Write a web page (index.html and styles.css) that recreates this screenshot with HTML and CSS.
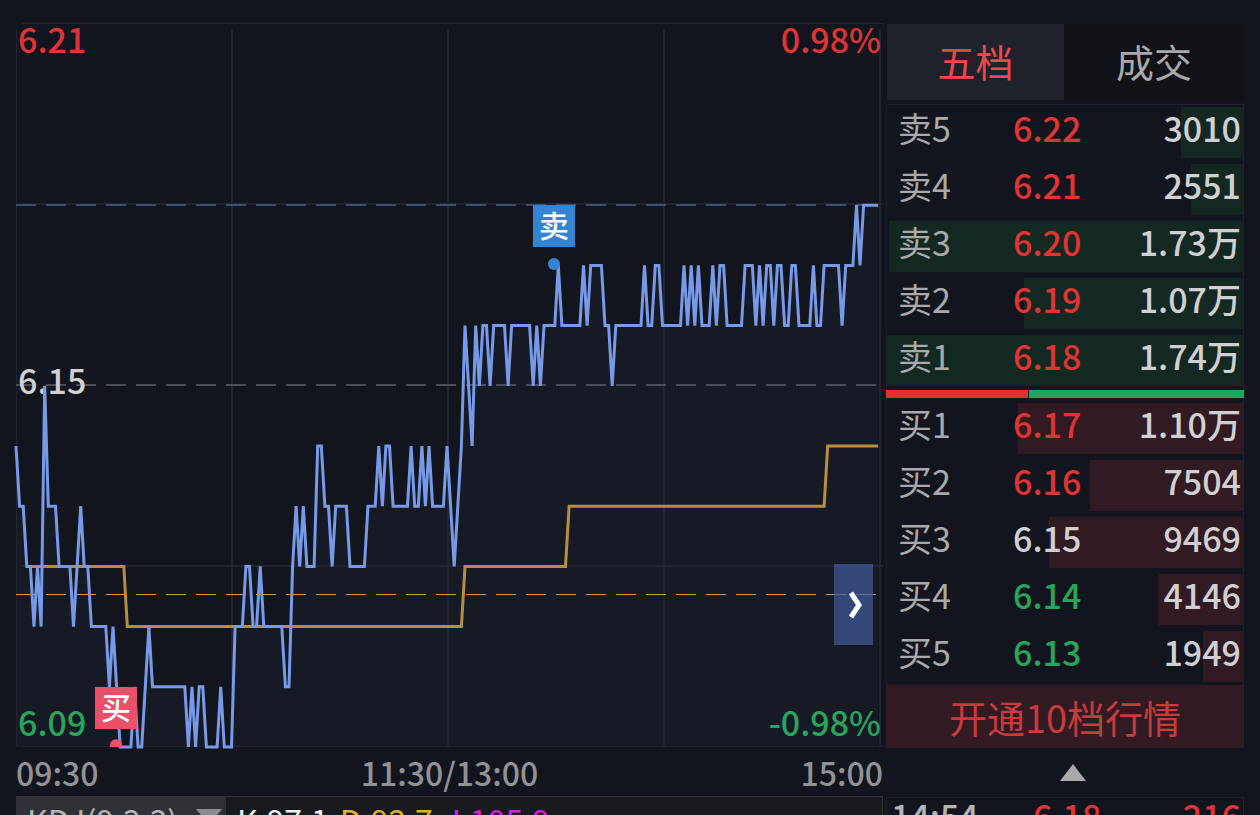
FILE: index.html
```
<!DOCTYPE html>
<html lang="zh-CN">
<head>
    <meta charset="UTF-8">
    <meta name="viewport" content="width=device-width, initial-scale=1.0">
    <title>分时行情</title>
    <link rel="stylesheet" href="styles.css">
</head>
<body>
    <main class="layout">
        <section class="left">
            <div class="chart">
                <svg viewBox="16 23 867 724" role="img" aria-label="分时走势">
                    <path id="area" class="area" d=""/>
                    <path class="grid thin" d="M22 23.5H883M16.5 29V747M22 746.5H883"/>
                    <path class="grid" d="M22 204H883M22 566H883M232 29V747M448 29V747M664 29V747M880 29V747"/>
                    <path class="dash high" d="M16 205H877"/>
                    <path class="dash mid" d="M16 385H877"/>
                    <path class="dash cost" d="M16 594.5H877"/>
                    <text class="up" x="18" y="53">6.21</text>
                    <text class="flat" x="18" y="394">6.15</text>
                    <text class="down" x="18" y="736">6.09</text>
                    <text class="up" x="881" y="53" text-anchor="end">0.98%</text>
                    <text class="down" x="881" y="736" text-anchor="end">-0.98%</text>
                    <polyline id="avg" class="line avg" points=""/>
                    <polyline id="price" class="line price" points=""/>
                    <circle class="sell" cx="554" cy="264" r="6"/>
                    <rect class="sell" x="533" y="205" width="42" height="42"/>
                    <text class="mark" x="554" y="237" text-anchor="middle">卖</text>
                    <path class="buy" d="M110.3 747A6 6 0 1 1 121.7 747Z"/>
                    <rect class="buy" x="95" y="687" width="42" height="42"/>
                    <text class="mark" x="116" y="719" text-anchor="middle">买</text>
                </svg>
                <button class="expand" type="button" aria-label="展开">
                    <svg viewBox="0 0 14 28" width="14" height="28"><path d="M2 2L10 14L2 26"/></svg>
                </button>
            </div>
            <div class="times">
                <span>09:30</span>
                <span>11:30/13:00</span>
                <span>15:00</span>
            </div>
            <div class="indicator">
                <div class="picker">
                    <select aria-label="指标">
                        <option>KDJ(9,3,3)</option>
                    </select>
                    <i class="arrow-down"></i>
                </div>
                <span class="k">K:97.1</span>
                <span class="d">D:92.7</span>
                <span class="j">J:105.9</span>
            </div>
        </section>

        <aside class="right">
            <div class="tabs">
                <button class="tab active" type="button">五档</button>
                <button class="tab" type="button">成交</button>
            </div>
            <div class="book">
                <table class="asks">
                    <tbody>
                        <tr style="--w: 17.3%"><th>卖5</th><td class="up">6.22</td><td>3010</td></tr>
                        <tr style="--w: 14.7%"><th>卖4</th><td class="up">6.21</td><td>2551</td></tr>
                        <tr style="--w: 99.4%"><th>卖3</th><td class="up">6.20</td><td>1.73万</td></tr>
                        <tr style="--w: 61.5%"><th>卖2</th><td class="up">6.19</td><td>1.07万</td></tr>
                        <tr style="--w: 100%"><th>卖1</th><td class="up">6.18</td><td>1.74万</td></tr>
                    </tbody>
                </table>
                <div class="ratio"><span style="width: 40%"></span></div>
                <table class="bids">
                    <tbody>
                        <tr style="--w: 63.2%"><th>买1</th><td class="up">6.17</td><td>1.10万</td></tr>
                        <tr style="--w: 43.1%"><th>买2</th><td class="up">6.16</td><td>7504</td></tr>
                        <tr style="--w: 54.4%"><th>买3</th><td>6.15</td><td>9469</td></tr>
                        <tr style="--w: 23.8%"><th>买4</th><td class="down">6.14</td><td>4146</td></tr>
                        <tr style="--w: 11.2%"><th>买5</th><td class="down">6.13</td><td>1949</td></tr>
                    </tbody>
                </table>
            </div>
            <button class="open-ten" type="button">开通10档行情</button>
            <button class="collapse" type="button" aria-label="收起">
                <svg viewBox="0 0 26 17" width="26" height="17"><path d="M13 0L26 17H0Z"/></svg>
            </button>
            <table class="deals">
                <tbody>
                    <tr><td>14:54</td><td class="up">6.18</td><td class="up">216</td></tr>
                </tbody>
            </table>
        </aside>
    </main>
    <script src="chart.js"></script>
</body>
</html>
```
FILE: styles.css
```
* {
    box-sizing: border-box;
}
body {
    margin: 0;
    height: 100vh;
    overflow: hidden;
    background: #12151d;
    color: #d0d0d2;
    font-family: 'Noto Sans CJK SC', 'Noto Sans', sans-serif;
    font-size: 34px;
}
button, select {
    margin: 0;
    padding: 0;
    border: none;
    border-radius: 0;
    font-family: inherit;
    cursor: pointer;
}
.layout {
    display: grid;
    grid-template-columns: minmax(0, 1fr) 358px;
    gap: 3px;
    padding: 23px 16px 0;
}
.up {
    color: #e03434;
    fill: #e03434;
}
.down {
    color: #28a45c;
    fill: #28a45c;
}
.flat {
    fill: #d0d0d2;
}

/* chart */
.chart {
    position: relative;
}
.chart > svg {
    display: block;
    width: 100%;
    overflow: visible;
}
.chart text {
    font-size: 34px;
    font-weight: 500;
}
.area {
    fill: #161a25;
}
.grid {
    fill: none;
    stroke: #212530;
    stroke-width: 2;
}
.grid.thin {
    stroke-width: 1;
}
.dash {
    fill: none;
    stroke-width: 2;
    stroke-dasharray: 20 10;
}
.high {
    stroke: #3f4d70;
}
.mid {
    stroke: #4b4e57;
}
.cost {
    stroke: #c9994f;
    stroke-width: 1;
}
.line {
    fill: none;
    stroke-width: 3;
}
.avg {
    stroke: #b98d3c;
}
.price {
    stroke: #769ae8;
}
.sell {
    fill: #3584d2;
}
.buy {
    fill: #e9506a;
}
.chart .mark {
    font-size: 30px;
    font-weight: 500;
    fill: #ffffff;
}
.expand {
    position: absolute;
    right: 10px;
    bottom: 102px;
    width: 39px;
    height: 81px;
    padding-left: 4px;
    background: rgba(66, 92, 155, 0.7);
}
.expand svg {
    display: block;
    margin: auto;
}
.expand path {
    fill: none;
    stroke: #ffffff;
    stroke-width: 5;
}
.times {
    display: flex;
    justify-content: space-between;
    height: 49px;
    font-size: 32px;
    font-weight: 500;
    line-height: 50px;
    color: #929296;
}
.indicator {
    display: flex;
    gap: 11px;
    height: 50px;
    border: 1px solid #30323b;
    background: #191a1f;
    font-size: 32px;
    line-height: 46px;
}
.picker {
    position: relative;
    width: 209px;
    background: #303137;
}
.picker select {
    width: 100%;
    height: 46px;
    padding-left: 10px;
    appearance: none;
    background: none;
    color: #b4b4b6;
    font-size: 32px;
}
.arrow-down {
    position: absolute;
    right: 4px;
    top: 12px;
    border: 13px solid transparent;
    border-top: 16px solid #8c8c8e;
    border-bottom: none;
    pointer-events: none;
}
.k {
    color: #f0f0f0;
}
.d {
    color: #e0ae30;
}
.j {
    color: #d820d8;
}

/* order book */
.tabs {
    display: grid;
    grid-template-columns: 177fr 180fr;
    margin: 1px 0 4px 1px;
}
.tab {
    height: 76px;
    padding-bottom: 4px;
    background: #101216;
    color: #a9a9ab;
    font-size: 38px;
}
.tab.active {
    background: #1f222b;
    color: #ea4a4c;
}
.book {
    border: 1px solid #1e222c;
    border-bottom: none;
    padding: 2px 0 3px;
}
table {
    display: block;
}
tbody {
    display: grid;
    gap: 6px;
}
tr {
    display: grid;
    grid-template-columns: 126px 80px 1fr;
    height: 51px;
    line-height: 42px;
    background: linear-gradient(#122820, #122820) no-repeat right / var(--w) 100%;
}
.bids tr {
    background-image: linear-gradient(#321a22, #321a22);
}
th, td {
    padding: 0;
    text-align: left;
    font-weight: 500;
}
th {
    padding-left: 11px;
    font-weight: 400;
    color: #a9a9ab;
}
td:last-child {
    padding-right: 2px;
    text-align: right;
}
.ratio {
    height: 8px;
    margin: 4px -1px 5px;
    background: #1fa55c;
}
.ratio span {
    display: block;
    height: 100%;
    border-right: 1px solid #12151d;
    background: #e62e30;
}
.open-ten {
    display: block;
    width: 100%;
    height: 63px;
    background: #321a22;
    color: #c83a3c;
    font-size: 38px;
}
.collapse {
    display: block;
    width: 100%;
    height: 49px;
    padding-left: 16px;
    background: none;
}
.collapse svg {
    display: block;
    margin: auto;
}
.collapse path {
    fill: #a9a9ab;
}
.deals {
    border: 1px solid #1e222c;
}
.deals tr {
    grid-template-columns: 142px 80px 1fr;
    padding-left: 4px;
    line-height: 36px;
    background: none;
}
.deals td:first-child {
    color: #b4b4b6;
}
```
FILE: chart.js
```
// minute:level pairs, level 0 is 6.09 and each level is 0.01
const priceData = '0:5 1:4 2:4 3:3 4:3 5:2 6:3 7:2 8:6 9:4 11:4 12:3 15:3 16:2 17:3 18:4 19:3 20:3 21:2 25:2 ' +
    '26:1 27:2 28:1 29:0 32:0 33:1 34:0 35:0 36:1 37:2 38:1 47:1 48:0 49:1 50:0 51:1 52:1 53:0 56:0 57:1 ' +
    '58:0 60:0 61:2 63:2 64:3 65:3 66:2 67:2 68:3 69:2 74:2 75:1 76:1 77:3 78:4 79:3 80:4 81:3 83:3 84:5 ' +
    '85:5 86:4 87:4 88:3 89:4 92:4 93:3 97:3 98:4 100:4 101:5 102:4 103:5 104:5 105:4 109:4 110:5 111:4 ' +
    '112:4 113:5 114:4 115:5 116:4 119:4 120:5 121:4 122:3 123:4 124:5 125:7 126:6 127:5 128:7 129:6 ' +
    '130:7 131:7 132:6 133:7 136:7 137:6 138:7 143:7 144:6 145:7 146:6 147:7 150:7 151:8 152:7 157:7 ' +
    '158:8 159:7 160:8 163:8 164:7 165:7 166:6 167:7 174:7 175:8 176:7 177:7 178:8 179:8 180:7 185:7 ' +
    '186:8 187:7 188:8 189:7 190:8 191:7 193:7 194:8 195:7 196:8 197:8 198:7 202:7 203:8 205:8 206:7 ' +
    '207:8 208:7 209:8 210:8 211:7 212:8 213:8 214:7 215:7 216:8 217:8 218:7 221:7 222:8 223:7 224:7 ' +
    '225:8 229:8 230:7 231:8 233:8 234:9 235:8 236:9 240:9';
const avgData = '3:3 30:3 31:2 124:2 125:3 153:3 154:4 225:4 226:5 240:5';

const left = 16;
const bottom = 747;
const chartWidth = 862;
const levelHeight = 60.2;

function toPoints(data) {
    return data.split(' ').map(item => {
        const [minute, level] = item.split(':').map(Number);
        const x = left + minute * chartWidth / 240;
        const y = bottom - level * levelHeight;
        return `${x.toFixed(1)},${y.toFixed(1)}`;
    }).join(' ');
}

const pricePoints = toPoints(priceData);
document.getElementById('price').setAttribute('points', pricePoints);
document.getElementById('avg').setAttribute('points', toPoints(avgData));
document.getElementById('area').setAttribute('d', `M${left},${bottom} L${pricePoints} V${bottom} Z`);
```
